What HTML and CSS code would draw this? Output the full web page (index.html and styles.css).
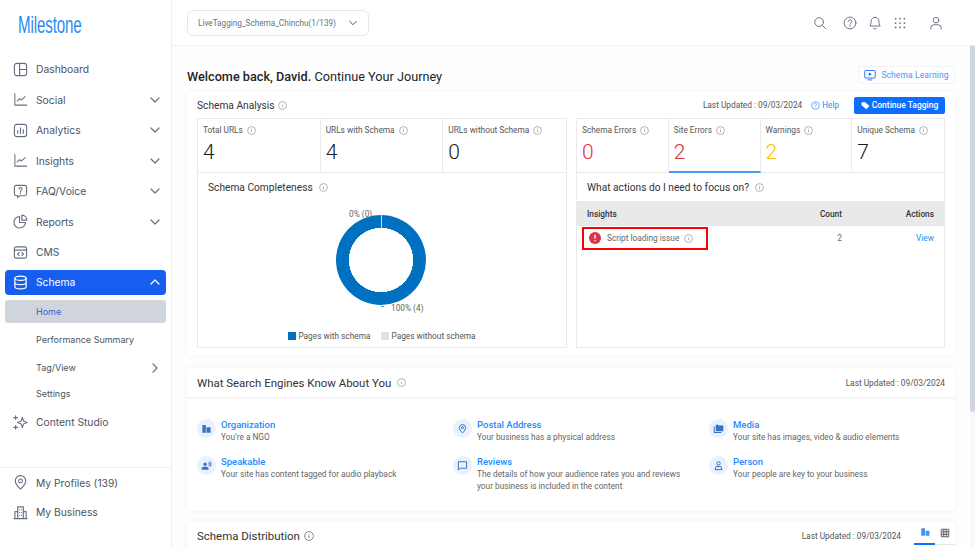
FILE: index.html
```html
<!DOCTYPE html>
<html lang="en">
<head>
<meta charset="utf-8">
<title>Schema Home</title>
<link rel="stylesheet" href="styles.css">
</head>
<body>
<svg class="defs" width="0" height="0">
  <symbol id="info" viewBox="0 0 16 16"><circle cx="8" cy="8" r="7" fill="none" stroke="currentColor" stroke-width="1.1"/><path d="M8 7v4.2M8 4.6v1" fill="none" stroke="currentColor" stroke-width="1.2"/></symbol>
  <symbol id="chev" viewBox="0 0 12 12"><path d="M2 4l4 4 4-4" fill="none" stroke="currentColor" stroke-width="1.2" stroke-linecap="round" stroke-linejoin="round"/></symbol>
  <symbol id="trend" viewBox="0 0 16 16"><path d="M2 1.500v12.500h12.500M4.500 9.500l2.500-2.500 2 1.500 4-3.500" fill="none" stroke="currentColor" stroke-width="1.1" stroke-linecap="round" stroke-linejoin="round"/></symbol>
</svg>
<div class="app">
  <aside class="sidebar">
    <div class="logo"><span class="logo-text">Milestone</span></div>
    <nav class="nav">
      <a class="nav-item"><svg class="nav-ico" viewBox="0 0 16 16"><rect x="1.500" y="1.500" width="13" height="13" rx="2.500"/><path d="M7 1.500v13M7 8h7.500"/></svg><span class="nav-label">Dashboard</span></a>
      <a class="nav-item"><svg class="nav-ico"><use href="#trend"/></svg><span class="nav-label">Social</span><svg class="nav-chev"><use href="#chev"/></svg></a>
      <a class="nav-item"><svg class="nav-ico" viewBox="0 0 16 16"><rect x="1.500" y="1.500" width="13" height="13" rx="2.500"/><path d="M5 11V8M8 11V5M11 11V7"/></svg><span class="nav-label">Analytics</span><svg class="nav-chev"><use href="#chev"/></svg></a>
      <a class="nav-item"><svg class="nav-ico"><use href="#trend"/></svg><span class="nav-label">Insights</span><svg class="nav-chev"><use href="#chev"/></svg></a>
      <a class="nav-item"><svg class="nav-ico" viewBox="0 0 16 16"><path d="M3.500 1.500h9a2 2 0 0 1 2 2v7a2 2 0 0 1-2 2H7l-2 2v-2H3.500a2 2 0 0 1-2-2v-7a2 2 0 0 1 2-2z"/><path d="M6.500 5.200a1.500 1.500 0 1 1 2.300 1.300c-.6.400-.8.700-.8 1.300M8 9.400v.6"/></svg><span class="nav-label">FAQ/Voice</span><svg class="nav-chev"><use href="#chev"/></svg></a>
      <a class="nav-item"><svg class="nav-ico" viewBox="0 0 16 16"><path d="M7 2.600a6.200 6.200 0 1 0 6.400 6.400H7z"/><path d="M9.500 1.200a5.500 5.500 0 0 1 5.300 5.300H9.500z"/></svg><span class="nav-label">Reports</span><svg class="nav-chev"><use href="#chev"/></svg></a>
      <a class="nav-item"><svg class="nav-ico" viewBox="0 0 16 16"><rect x="1.500" y="2" width="13" height="12" rx="2"/><path d="M1.500 5.500h13M6.500 8l-1.700 1.700 1.700 1.700M9.500 8l1.700 1.700-1.700 1.700"/></svg><span class="nav-label">CMS</span></a>
      <a class="nav-item nav-active"><svg class="nav-ico" viewBox="0 0 16 16"><ellipse cx="8" cy="3.500" rx="6" ry="2.300"/><path d="M2 3.500v9c0 1.300 2.700 2.300 6 2.300s6-1 6-2.300v-9M2 8c0 1.300 2.700 2.300 6 2.300s6-1 6-2.300"/></svg><span class="nav-label">Schema</span><svg class="nav-chev nav-chev-up"><use href="#chev"/></svg></a>
      <div class="sub">
        <a class="sub-item sub-current">Home</a>
        <a class="sub-item sub-perf">Performance Summary</a>
        <a class="sub-item sub-tag"><span class="nav-label">Tag/View</span><svg class="nav-chev nav-chev-right"><use href="#chev"/></svg></a>
        <a class="sub-item sub-set">Settings</a>
      </div>
      <a class="nav-item"><svg class="nav-ico" viewBox="0 0 16 16"><path d="M10 2.500l1.300 4 3.700 1.500-3.700 1.500-1.300 4-1.300-4L5 8l3.700-1.500zM2.800 .8v4M.8 2.800h4M2.800 11.200v4M.8 13.200h4"/></svg><span class="nav-label">Content Studio</span></a>
    </nav>
    <div class="nav-foot">
      <a class="nav-item foot-first"><svg class="nav-ico" viewBox="0 0 16 16"><path d="M8 15s5.500-4.500 5.500-8.800a5.500 5.500 0 0 0-11 0C2.500 10.500 8 15 8 15z"/><circle cx="8" cy="6.300" r="2"/></svg><span class="nav-label">My Profiles (139)</span></a>
      <a class="nav-item"><svg class="nav-ico" viewBox="0 0 16 16"><path d="M1 14.500h14M5 14.500V2h6v12.500M5 7H2v7.500M11 7h3v7.500M7 5h.1M9 5h.1M7 8h.1M9 8h.1M7 11h.1M9 11h.1"/></svg><span class="nav-label">My Business</span></a>
    </div>
  </aside>
  <div class="content">
    <header class="topbar">
      <button class="site-select"><span>LiveTagging_Schema_Chinchu(1/139)</span><svg class="select-chev"><use href="#chev"/></svg></button>
      <div class="top-icons">
        <svg class="top-ico ti-search" viewBox="0 0 16 16"><circle cx="7" cy="7" r="5"/><path d="M11 11l3.800 3.800"/></svg>
        <svg class="top-ico ti-help" viewBox="0 0 16 16"><circle cx="8" cy="8" r="6.800"/><path d="M6 6.200a2 2 0 1 1 3 1.800c-.7.400-1 .8-1 1.500M8 11.300v.6"/></svg>
        <svg class="top-ico ti-bell" viewBox="0 0 16 16"><path d="M8 1.500a4.500 4.500 0 0 0-4.500 4.500c0 4-1.500 5.500-1.500 5.500h12s-1.500-1.500-1.500-5.500A4.500 4.500 0 0 0 8 1.500zM6.500 14a1.700 1.700 0 0 0 3 0"/></svg>
        <svg class="top-ico ti-grid" viewBox="0 0 16 16"><path class="dots" d="M3 3h.01M8 3h.01M13 3h.01M3 8h.01M8 8h.01M13 8h.01M3 13h.01M8 13h.01M13 13h.01"/></svg>
        <svg class="top-ico ti-user" viewBox="0 0 16 16"><circle cx="8" cy="4.800" r="3.200"/><path d="M2 15v-1.500a3.500 3.500 0 0 1 3.500-3.500h5a3.500 3.500 0 0 1 3.500 3.500V15"/></svg>
      </div>
    </header>
    <div class="body-row">
      <main class="main">
        <div class="welcome-row">
          <h1 class="welcome"><strong>Welcome back, David.</strong> Continue Your Journey</h1>
          <a class="learn-btn"><svg class="learn-ico" viewBox="0 0 16 16"><rect x="1" y="2" width="14" height="10" rx="1"/><path class="solid" d="M6.500 4.700v4.600L10.500 7z"/><path d="M5 14.500h6"/></svg>Schema Learning</a>
        </div>

        <section class="card card-analysis">
          <div class="analysis-head">
            <h2 class="card-title-sm">Schema Analysis<svg class="info i-head"><use href="#info"/></svg></h2>
            <div class="head-right">
              <span class="updated">Last Updated : 09/03/2024</span>
              <a class="help"><svg class="help-ico" viewBox="0 0 16 16"><circle cx="8" cy="8" r="6.800"/><path d="M6 6.200a2 2 0 1 1 3 1.800c-.7.400-1 .8-1 1.500M8 11.300v.6"/></svg>Help</a>
              <a class="tag-btn"><svg class="tag-ico" viewBox="0 0 16 16"><path d="M1 2h6.500l7.500 7-5.500 5.500L1 7.500z"/></svg>Continue Tagging</a>
            </div>
          </div>
          <div class="panels">
            <div class="panel">
              <div class="metrics metrics-3">
                <div class="metric"><div class="metric-label">Total URLs<svg class="info"><use href="#info"/></svg></div><div class="metric-value">4</div></div>
                <div class="metric"><div class="metric-label">URLs with Schema<svg class="info"><use href="#info"/></svg></div><div class="metric-value">4</div></div>
                <div class="metric"><div class="metric-label">URLs without Schema<svg class="info"><use href="#info"/></svg></div><div class="metric-value">0</div></div>
              </div>
              <div class="panel-body">
                <h3 class="panel-title">Schema Completeness<svg class="info i-panel"><use href="#info"/></svg></h3>
                <div class="chart">
                  <div class="donut"><span class="lbl lbl-zero">0% (0)</span><span class="lbl lbl-full">100% (4)</span></div>
                </div>
                <div class="legend">
                  <span class="legend-item"><i class="sw sw-blue"></i>Pages with schema</span>
                  <span class="legend-item"><i class="sw sw-grey"></i>Pages without schema</span>
                </div>
              </div>
            </div>
            <div class="panel">
              <div class="metrics metrics-4">
                <div class="metric"><div class="metric-label">Schema Errors<svg class="info"><use href="#info"/></svg></div><div class="metric-value red">0</div></div>
                <div class="metric metric-on"><div class="metric-label">Site Errors<svg class="info"><use href="#info"/></svg></div><div class="metric-value red">2</div></div>
                <div class="metric"><div class="metric-label">Warnings<svg class="info"><use href="#info"/></svg></div><div class="metric-value amber">2</div></div>
                <div class="metric"><div class="metric-label">Unique Schema<svg class="info"><use href="#info"/></svg></div><div class="metric-value">7</div></div>
              </div>
              <div class="panel-body panel-body-flush">
                <h3 class="panel-title panel-title-pad">What actions do I need to focus on?<svg class="info i-panel"><use href="#info"/></svg></h3>
                <div class="table-row table-head"><span class="col-name">Insights</span><span class="col-count">Count</span><span class="col-act">Actions</span></div>
                <div class="table-row table-data">
                  <span class="col-name"><span class="issue-box"><svg class="err-ico" viewBox="0 0 16 16"><circle cx="8" cy="8" r="8"/><path d="M8 3.800v5M8 11.100v1.100"/></svg>Script loading issue<svg class="info i-issue"><use href="#info"/></svg></span></span>
                  <span class="col-count">2</span><a class="col-act view">View</a>
                </div>
              </div>
            </div>
          </div>
        </section>

        <section class="card card-know">
          <div class="know-head">
            <h2 class="card-title">What Search Engines Know About You<svg class="info i-know"><use href="#info"/></svg></h2>
            <span class="updated">Last Updated : 09/03/2024</span>
          </div>
          <div class="know-grid">
            <div class="know-item"><span class="bubble"><svg viewBox="0 0 16 16"><path class="solid" d="M2 3h5v11H2zM8 6h6v8H8z"/></svg></span><div><a class="know-title">Organization</a><p class="know-text">You’re a NGO</p></div></div>
            <div class="know-item"><span class="bubble"><svg viewBox="0 0 16 16"><path class="line" d="M8 14.500s4.500-4 4.500-7.700a4.500 4.500 0 0 0-9 0c0 3.700 4.500 7.700 4.500 7.700z"/><circle class="line" cx="8" cy="6.800" r="1.500"/></svg></span><div><a class="know-title">Postal Address</a><p class="know-text">Your business has a physical address</p></div></div>
            <div class="know-item"><span class="bubble"><svg viewBox="0 0 16 16"><path class="solid" d="M1 5h1.500v8H12v1.500H1zM4 2.500h3.500l1.200 1.300H15V12H4z"/></svg></span><div><a class="know-title">Media</a><p class="know-text">Your site has images, video &amp; audio elements</p></div></div>
            <div class="know-item"><span class="bubble"><svg viewBox="0 0 16 16"><circle class="solid" cx="6" cy="6" r="2.500"/><path class="solid" d="M1 14v-1.500C1 10.500 3 9.500 6 9.500s5 1 5 3V14z"/><path class="line" d="M11 3.500a3.500 3.500 0 0 1 0 5M13 2a6 6 0 0 1 0 8"/></svg></span><div><a class="know-title">Speakable</a><p class="know-text">Your site has content tagged for audio playback</p></div></div>
            <div class="know-item"><span class="bubble"><svg viewBox="0 0 16 16"><path class="line" d="M2 2.500h12v9.500H5l-3 2.500z"/></svg></span><div><a class="know-title">Reviews</a><p class="know-text">The details of how your audience rates you and reviews your business is included in the content</p></div></div>
            <div class="know-item"><span class="bubble"><svg viewBox="0 0 16 16"><circle class="line" cx="8" cy="5" r="2.500"/><path class="line" d="M3 14l1.500-4.500h7L13 14z"/></svg></span><div><a class="know-title">Person</a><p class="know-text">Your people are key to your business</p></div></div>
          </div>
        </section>

        <section class="card card-dist">
          <div class="dist-head">
            <h2 class="card-title">Schema Distribution<svg class="info i-dist"><use href="#info"/></svg></h2>
            <div class="dist-right">
              <span class="updated">Last Updated : 09/03/2024</span>
              <div class="view-tabs">
                <span class="view-tab view-tab-on"><svg viewBox="0 0 16 16"><path class="solid" d="M2 2h6v12H2zM9 6h6v8H9z"/></svg></span>
                <span class="view-tab"><svg viewBox="0 0 16 16"><path class="grid-line" d="M2 2h12v12H2zM2 6h12M2 10h12M6 2v12M10 2v12"/></svg></span>
              </div>
            </div>
          </div>
        </section>
      </main>
      <div class="scrollbar"><div class="thumb"></div></div>
    </div>
  </div>
</div>
</body>
</html>
```
FILE: styles.css
```css
* { box-sizing: border-box; }
html, body { margin: 0; padding: 0; height: 100%; overflow: hidden; }
body { width: 975px; height: 548px; background: #fff; font-family: Roboto, "Liberation Sans", sans-serif; color: #212529; }
h1, h2, h3, p { margin: 0; font-weight: 400; }
.defs { display: block; height: 0; }
.app { display: flex; height: 548px; }

/* sidebar */
.sidebar { width: 172px; flex: none; border-right: 1px solid #eef0f3; display: flex; flex-direction: column; font-family: Inter, "Liberation Sans", sans-serif; }
.logo { height: 54px; padding: 11px 0 0 18px; }
.logo-text { display: inline-block; font-family: "Liberation Sans", sans-serif; font-size: 24px; line-height: 28px; color: #2a8bf0; transform: scaleX(.63); transform-origin: left center; letter-spacing: -.2px; white-space: nowrap; }
.nav { flex: 1; padding: 0 5px; }
.nav-item { display: flex; align-items: center; height: 30.500px; padding: 0 5px 0 8px; font-size: 10.300px; color: #4b5563; border-radius: 4px; }
.nav-ico { width: 15px; height: 15px; margin-right: 8px; flex: none; fill: none; stroke: #667085; stroke-width: 1.200; stroke-linecap: round; stroke-linejoin: round; color: #667085; }
.nav-label { flex: 1; }
.nav-chev { width: 12px; height: 12px; color: #667085; flex: none; }
.nav-active { background: #155eef; color: #fff; height: 25px; margin: 2px 0 2.500px; }
.nav-active .nav-ico { stroke: #fff; stroke-width: 1.300; }
.nav-active .nav-chev { color: #fff; }
.nav-chev-up { transform: rotate(180deg); }
.nav-chev-right { transform: rotate(-90deg); }
.sub { display: flex; flex-direction: column; }
.sub-item { display: flex; align-items: center; padding: 0 5px 0 31px; font-size: 9px; color: #4b5563; border-radius: 3px; }
.sub-current { height: 23px; background: #d0d5dd; color: #2f5fdc; margin-top: 3px; }
.sub-perf { height: 28px; margin-top: 2.500px; }
.sub-tag { height: 28px; }
.sub-set { height: 24px; margin-bottom: 1.500px; }
.nav-foot { border-top: 1px solid #eef0f3; padding: 0 5px 20px; height: 81px; }
.foot-first { height: 29px; }

/* top */
.content { flex: 1; min-width: 0; display: flex; flex-direction: column; }
.topbar { height: 46px; flex: none; display: flex; align-items: center; justify-content: space-between; padding: 0 32px 0 15px; border-bottom: 1px solid #eef0f3; }
.site-select { width: 182px; height: 26px; border: 1px solid #e4e7ec; border-radius: 6px; background: #fff; display: flex; align-items: center; justify-content: space-between; padding: 0 10px; font-family: Roboto, sans-serif; font-size: 8.200px; color: #667085; }
.select-chev { width: 10px; height: 10px; color: #4b5563; }
.top-icons { display: flex; align-items: center; }
.top-ico { fill: none; stroke: #667085; stroke-width: 1.100; stroke-linecap: round; stroke-linejoin: round; width: 14px; height: 14px; }
.ti-search { margin-right: 16px; }
.ti-help { margin-right: 11px; }
.ti-bell { margin-right: 11px; }
.ti-grid { margin-right: 22px; }
.dots { stroke-width: 2; }

.body-row { flex: 1; min-height: 0; display: flex; }
.main { flex: 1; min-width: 0; overflow: hidden; padding: 0 15px; background: #fefefe; }
.scrollbar { width: 5px; flex: none; background: #f8f8f9; }
.thumb { height: 366px; background: #d0d5de; border-radius: 0 0 2px 2px; }

.welcome-row { height: 46px; display: flex; align-items: center; justify-content: space-between; padding-top: 14px; }
.welcome { font-size: 12.700px; color: #212529; }
.welcome strong { font-weight: 500; }
.learn-btn { display: flex; align-items: center; height: 18px; width: 97px; justify-content: center; margin-top: -2px; border: 1px solid #f0f2f5; border-radius: 3px; font-size: 8.500px; color: #4f95fb; letter-spacing: .1px; }
.learn-ico { width: 12px; height: 12px; margin-right: 5px; fill: none; stroke: #0d6efd; stroke-width: 1.200; }
.learn-ico .solid { fill: #0d6efd; stroke: none; }

.card { background: #fff; border-radius: 4px; box-shadow: 0 0 6px rgba(30, 40, 60, .06); }
.card-analysis { height: 263px; padding: 0 10px; }
.analysis-head { height: 26px; display: flex; align-items: center; justify-content: space-between; }
.card-title-sm { font-size: 10.200px; color: #333; }
.head-right { display: flex; align-items: center; }
.updated { font-size: 8.300px; color: #555; }
.help { display: flex; align-items: center; margin-left: 9px; font-size: 8.200px; color: #2a8bf0; }
.help-ico { width: 9px; height: 9px; margin-right: 2px; fill: none; stroke: #2a8bf0; stroke-width: 1.200; }
.tag-btn { display: flex; align-items: center; justify-content: center; width: 91px; height: 17px; margin-left: 15px; background: #0d6efd; border-radius: 2px; color: #fff; font-size: 8.500px; font-weight: 500; }
.tag-ico { width: 9px; height: 9px; margin-right: 2px; fill: #fff; }

.info { width: 9px; height: 9px; margin-left: 4px; color: #888; vertical-align: -1px; flex: none; }
.i-head { margin-left: 3px; }
.i-panel { margin-left: 6px; }
.i-issue { margin-left: 5px; }
.i-know { margin-left: 6px; }
.i-dist { margin-left: 4px; width: 10px; height: 10px; color: #555; }

.panels { display: grid; grid-template-columns: 370px 369px; column-gap: 9px; }
.panel { border: 1px solid #eaeaea; height: 230px; display: flex; flex-direction: column; }
.metrics { display: grid; height: 54px; border-bottom: 1px solid #eaeaea; flex: none; }
.metrics-3 { grid-template-columns: repeat(3, 1fr); }
.metrics-4 { grid-template-columns: repeat(4, 1fr); }
.metric { padding: 5.500px 5px 0; border-right: 1px solid #eaeaea; }
.metric:last-child { border-right: 0; }
.metric-on { border-bottom: 2px solid #4b97f5; height: 54px; }
.metric-label { font-size: 8.300px; color: #555; display: flex; align-items: center; height: 11px; }
.metric-value { font-size: 21px; line-height: 24px; margin-top: 4px; color: #1a1d21; font-weight: 300; }
.red { color: #dc3545; }
.amber { color: #ffc107; }

.panel-body { flex: 1; padding: 0 10px; display: flex; flex-direction: column; }
.panel-title { font-size: 10.200px; color: #333; height: 28px; display: flex; align-items: center; }
.chart { display: flex; justify-content: center; height: 130px; padding: 14px 2px 0 0; }
.donut { width: 90px; height: 90px; border-radius: 50%; position: relative; background: radial-gradient(circle closest-side, #fff 71%, #0070c0 71.800%); }
.donut::before { content: ""; position: absolute; left: 45px; top: 0; width: 1px; height: 13px; background: #cfe0f0; }
.donut::after { content: ""; position: absolute; left: 45px; top: 91px; width: 3px; height: 1px; background: #5a9fd8; }
.lbl { position: absolute; font-size: 8.300px; color: #666; white-space: nowrap; }
.lbl-zero { left: 13px; top: -6.500px; }
.lbl-full { left: 55px; top: 88px; }
.legend { display: flex; justify-content: center; gap: 11px; font-size: 8.300px; color: #555; }
.legend-item { display: flex; align-items: center; }
.sw { width: 8px; height: 8px; margin-right: 2px; }
.sw-blue { background: #0070c0; }
.sw-grey { background: #e2e2e2; }

.panel-body-flush { padding: 0; }
.panel-title-pad { padding-left: 10px; }
.table-row { display: flex; align-items: center; font-size: 8.300px; padding: 0 10px; }
.table-head { height: 25px; background: #e9e9e9; font-weight: 500; color: #333; }
.table-data { height: 24px; color: #666; }
.col-name { flex: 1; }
.col-count { width: 40px; text-align: right; }
.col-act { width: 92px; text-align: right; }
.view { color: #2a8bf0; }
.issue-box { display: inline-flex; align-items: center; height: 23px; width: 126px; margin-left: -5px; padding-left: 5px; border: 2px solid #f00; }
.err-ico { width: 12px; height: 12px; margin-right: 6px; }
.err-ico circle { fill: #dc3545; }
.err-ico path { stroke: #fff; stroke-width: 2; fill: none; }

.card-know { height: 143px; margin-top: 13px; }
.know-head { height: 31px; display: flex; align-items: center; justify-content: space-between; padding: 0 10px; border-bottom: 2px solid #f5f5f5; }
.card-title { font-size: 11.450px; color: #333; display: flex; align-items: center; }
.know-grid { display: grid; grid-template-columns: 256px 256px 1fr; row-gap: 10px; padding: 19px 10px 0; }
.know-item { display: flex; align-items: flex-start; min-height: 27px; }
.bubble { width: 19px; height: 19px; border-radius: 50%; background: #e8f1fd; display: flex; align-items: center; justify-content: center; margin: 1px 5px 0 0; flex: none; }
.bubble svg { width: 11px; height: 11px; }
.solid { fill: #3a72c4; }
.line { fill: none; stroke: #2b62b5; stroke-width: 1.300; }
.know-title { display: block; font-size: 9.500px; line-height: 13px; color: #1a8cff; font-weight: 500; }
.know-text { font-size: 8.300px; line-height: 12.400px; color: #666; width: 215px; }

.card-dist { margin-top: 11px; height: 40px; }
.dist-head { height: 28px; display: flex; align-items: center; justify-content: space-between; padding: 0 0 0 10px; }
.dist-right { display: flex; align-items: center; }
.view-tabs { display: flex; margin-left: 13px; border-bottom: 1px solid #e6e6e6; height: 21px; align-items: center; margin-top: -3px; }
.view-tab { width: 20px; height: 21px; display: flex; align-items: center; justify-content: center; padding-bottom: 3px; }
.view-tab svg { width: 10px; height: 10px; }
.view-tab-on { border-bottom: 2px solid #0d6efd; width: 21px; }
.view-tab-on .solid { fill: #3f93f5; }
.grid-line { fill: none; stroke: #444; stroke-width: 1.300; }
```
